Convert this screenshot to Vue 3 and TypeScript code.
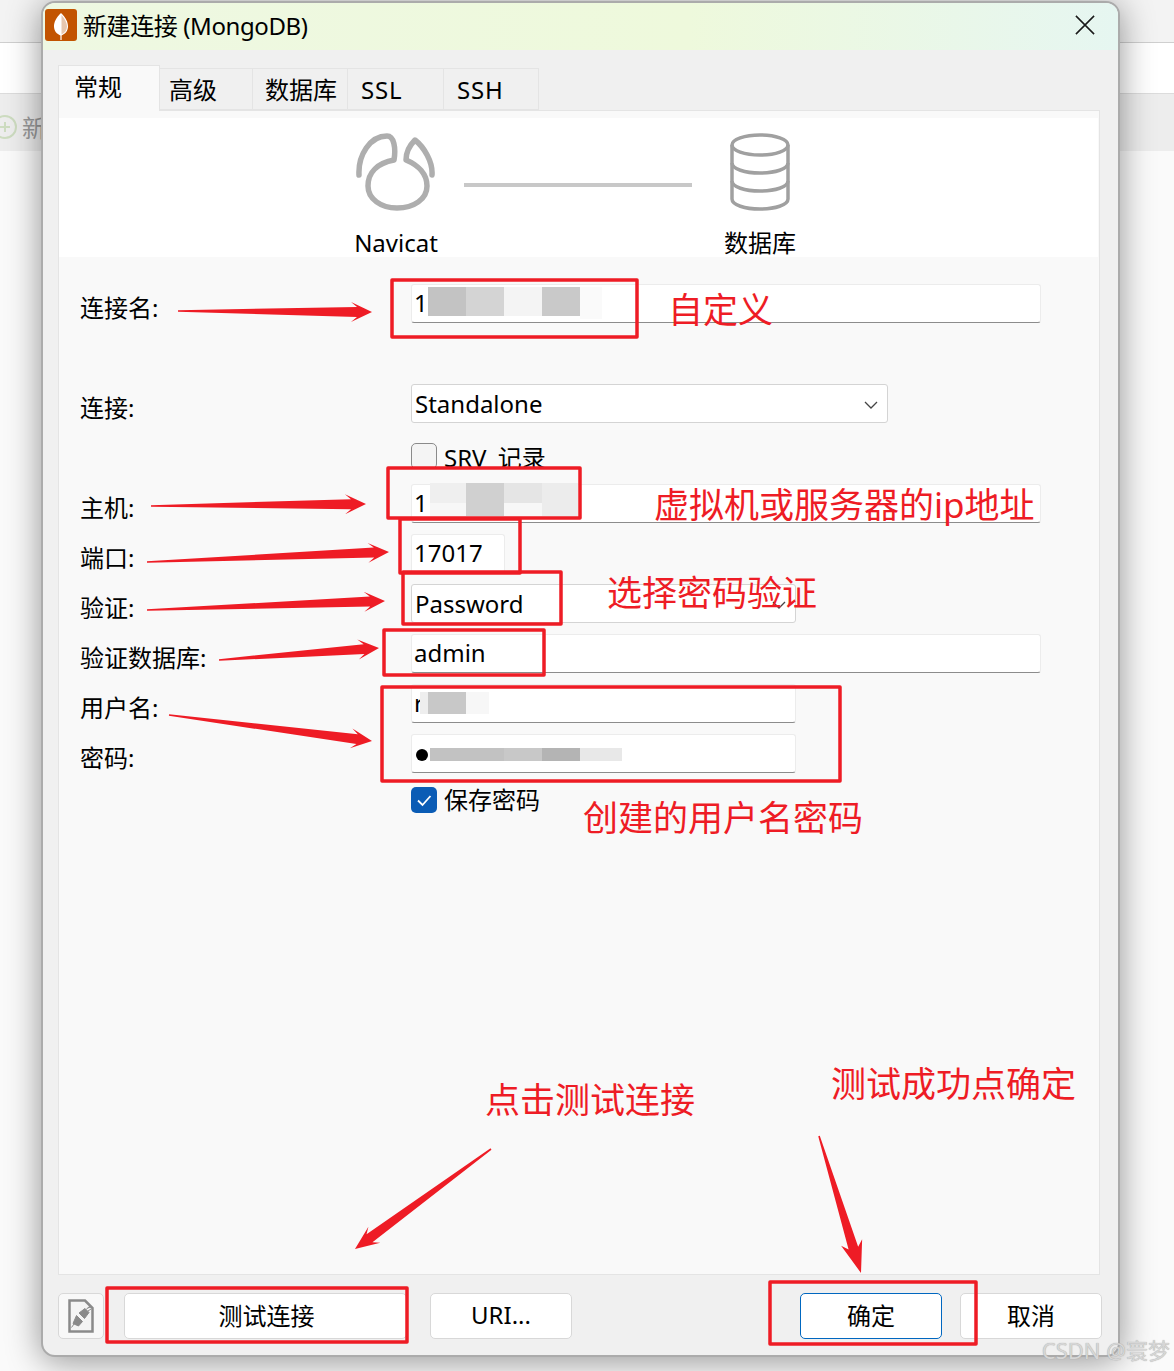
<script setup lang="ts">
import { computed } from 'vue'

type Pt = [number, number]

// hand-drawn arrows of the annotation layer: tail -> tip
const arrows: { from: Pt; to: Pt; len?: number; half?: number }[] = [
  { from: [178, 311], to: [372, 312] },
  { from: [151, 506], to: [366, 504] },
  { from: [147, 562], to: [389, 552] },
  { from: [147, 610], to: [385, 601] },
  { from: [219, 660], to: [379, 648] },
  { from: [169, 715], to: [372, 741] },
  { from: [491, 1149], to: [355, 1249], len: 24, half: 10 },
  { from: [819, 1136], to: [861, 1273], len: 32, half: 11 },
]

const arrowPoints = computed(() =>
  arrows.map(({ from, to, len = 21, half = 10 }) => {
    const dx = to[0] - from[0]
    const dy = to[1] - from[1]
    const d = Math.hypot(dx, dy)
    const ux = dx / d
    const uy = dy / d
    const at = (back: number, side: number) =>
      `${to[0] - ux * back - uy * side},${to[1] - uy * back + ux * side}`
    return [
      at(d, 0.8),
      at(len - 6, 5),
      at(len, half),
      at(0, 0),
      at(len, -half),
      at(len - 6, -5),
      at(d, -0.8),
    ].join(' ')
  }),
)

const boxes = [
  { x: 392, y: 280, w: 245, h: 57 },
  { x: 400, y: 519, w: 120, h: 54 },
  { x: 388, y: 468, w: 192, h: 50 },
  { x: 403, y: 572, w: 158, h: 52 },
  { x: 384, y: 630, w: 160, h: 45 },
  { x: 382, y: 687, w: 458, h: 94 },
  { x: 107, y: 1288, w: 300, h: 54 },
  { x: 770, y: 1282, w: 206, h: 62 },
]

// blurred-out values in the fields
const mosaic = [
  { x: 428, y: 287, w: 38, h: 29, c: '#c3c3c3' },
  { x: 466, y: 287, w: 38, h: 29, c: '#d4d4d4' },
  { x: 504, y: 287, w: 38, h: 29, c: '#f4f4f4' },
  { x: 542, y: 287, w: 38, h: 29, c: '#c9c9c9' },
  { x: 580, y: 287, w: 22, h: 32, c: '#fafafa' },
  { x: 430, y: 503, w: 148, h: 14, c: '#f7f7f7' },
  { x: 430, y: 483, w: 36, h: 20, c: '#efefef' },
  { x: 466, y: 483, w: 38, h: 33, c: '#d0d0d0' },
  { x: 504, y: 483, w: 38, h: 20, c: '#e5e5e5' },
  { x: 542, y: 483, w: 36, h: 33, c: '#ececec' },
  { x: 420, y: 692, w: 8, h: 22, c: '#eeeeee' },
  { x: 428, y: 692, w: 38, h: 22, c: '#c8c8c8' },
  { x: 466, y: 692, w: 23, h: 22, c: '#f7f7f7' },
  { x: 430, y: 748, w: 74, h: 13, c: '#c2c2c2' },
  { x: 504, y: 748, w: 38, h: 13, c: '#c8c8c8' },
  { x: 542, y: 748, w: 38, h: 13, c: '#b4b4b4' },
  { x: 580, y: 748, w: 42, h: 13, c: '#e8e8e8' },
]

const notes = [
  { text: '自定义', x: 668, y: 286 },
  { text: '虚拟机或服务器的ip地址', x: 654, y: 481 },
  { text: '选择密码验证', x: 607, y: 569 },
  { text: '创建的用户名密码', x: 583, y: 794 },
  { text: '点击测试连接', x: 485, y: 1076 },
  { text: '测试成功点确定', x: 831, y: 1060 },
]

const tabs = ['高级', '数据库', 'SSL', 'SSH']
</script>

<template>
  <div class="desk">
    <div class="backdrop">
      <div class="bg-top"></div>
      <div class="bg-white"></div>
      <div class="bg-band">
        <svg class="bg-plus" viewBox="0 0 26 26" fill="none" stroke="#cddcc0" stroke-width="2">
          <circle cx="13" cy="13" r="11" />
          <path d="M13 8v10M8 13h10" />
        </svg>
        <span class="bg-text">新</span>
      </div>
    </div>

    <div class="dialog">
      <div class="titlebar">
        <span class="app-icon">
          <svg viewBox="0 0 32 32" width="32" height="32">
            <path d="M16 4C11 9 9 13 9 17.500C9 22 12 25 15.400 26.500L15.400 31H16.600L16.600 26.500C20 25 23 22 23 17.500C23 13 21 9 16 4Z" fill="#fff" />
            <path d="M16.500 6C20 10 22 14 22 17.500C22 21 20 24 16.500 25.500Z" fill="#e7c7ae" />
          </svg>
        </span>
        <span class="title">新建连接 (MongoDB)</span>
        <svg class="close" viewBox="0 0 22 22" fill="none" stroke="#1a1a1a" stroke-width="1.700">
          <path d="M1 1l20 20M21 1L1 21" />
        </svg>
      </div>

      <div class="tabs">
        <div class="tab active">常规</div>
        <div v-for="t in tabs" :key="t" class="tab">{{ t }}</div>
      </div>

      <div class="panel">
        <div class="hero">
          <div class="hero-col">
            <svg class="hero-icon" viewBox="356 133 80 80" fill="none" stroke="#aeaeae" stroke-width="5.500" stroke-linecap="round" stroke-linejoin="round">
              <path d="M359 175C358 155 370 136 387 136C394 136 396 148 394 160C378 163 368 172 368 186C368 199 381 208 397 208C414 208 427 199 427 186C427 174 418 165 406 160C406 152 409 146 415 140C424 147 433 162 432 175" />
            </svg>
            <div class="hero-label">Navicat</div>
          </div>
          <div class="hero-line"></div>
          <div class="hero-col">
            <svg class="hero-icon" viewBox="720 133 80 80" fill="none" stroke="#a0a0a0" stroke-width="3.500">
              <ellipse cx="760" cy="145" rx="28" ry="10" />
              <path d="M732 145V199C732 205 745 209 760 209C775 209 788 205 788 199V145" />
              <path d="M732 163C732 169 745 173 760 173C775 173 788 169 788 163" />
              <path d="M732 181C732 187 745 191 760 191C775 191 788 187 788 181" />
            </svg>
            <div class="hero-label">数据库</div>
          </div>
        </div>

        <div class="form">
          <div class="row">
            <label>连接名:</label>
            <div class="input w-full">1</div>
          </div>
          <div class="row mt-conn">
            <label>连接:</label>
            <div class="select w-select">
              Standalone
              <svg class="chev" viewBox="0 0 14 8" fill="none" stroke="#444" stroke-width="1.300"><path d="M1 1l6 6 6-6" /></svg>
            </div>
          </div>
          <div class="row-check mt-srv">
            <span class="check"></span>
            <span class="srv">SRV 记录</span>
          </div>
          <div class="row mt-host">
            <label>主机:</label>
            <div class="input w-full">1</div>
          </div>
          <div class="row">
            <label>端口:</label>
            <div class="input w-port">17017</div>
          </div>
          <div class="row">
            <label>验证:</label>
            <div class="select w-mid">
              Password
              <svg class="chev" viewBox="0 0 14 8" fill="none" stroke="#444" stroke-width="1.300"><path d="M1 1l6 6 6-6" /></svg>
            </div>
          </div>
          <div class="row">
            <label>验证数据库:</label>
            <div class="input w-full">admin</div>
          </div>
          <div class="row">
            <label>用户名:</label>
            <div class="input w-mid">r</div>
          </div>
          <div class="row">
            <label>密码:</label>
            <div class="input w-mid"></div>
          </div>
          <div class="row-check mt-save">
            <span class="check on">
              <svg viewBox="0 0 26 26" fill="none" stroke="#fff" stroke-width="1.800"><path d="M7 13.500l4.500 4.500 8-9" /></svg>
            </span>
            <span>保存密码</span>
          </div>
        </div>
      </div>

      <div class="footer">
        <button class="btn btn-icon">
          <svg viewBox="0 0 26 34" width="26" height="34">
            <path d="M1.500 1.500H17L24.500 9V32.500H1.500Z" fill="#f4f4f4" stroke="#8a8a8a" stroke-width="2.500" />
            <path d="M11 14L17 9.500L21 13.500L16.500 19.500ZM18.500 10L21.500 7.500L22.500 8.500M20 12L23 10" fill="#8a8a8a" stroke="#8a8a8a" />
            <path d="M8.500 16.500L14.500 22.500L10.500 27L5 24.500ZM6 25L3.500 28.500" fill="#8a8a8a" stroke="#8a8a8a" />
          </svg>
        </button>
        <button class="btn btn-test">测试连接</button>
        <button class="btn btn-uri">URI...</button>
        <button class="btn btn-ok">确定</button>
        <button class="btn btn-cancel">取消</button>
      </div>
    </div>

    <svg class="marks" viewBox="0 0 1174 1371" width="1174" height="1371">
      <rect v-for="(m, i) in mosaic" :key="i" :x="m.x" :y="m.y" :width="m.w" :height="m.h" :fill="m.c" />
      <circle cx="422" cy="755" r="6" fill="#000" />
      <rect v-for="(b, i) in boxes" :key="'b' + i" :x="b.x" :y="b.y" :width="b.w" :height="b.h" fill="none" stroke="#ee1c25" stroke-width="3.500" stroke-linejoin="round" />
      <polygon v-for="(p, i) in arrowPoints" :key="'a' + i" :points="p" fill="#ee1c25" />
    </svg>

    <span v-for="n in notes" :key="n.text" class="note" :style="{ left: n.x + 'px', top: n.y + 'px' }">{{ n.text }}</span>
    <span class="watermark">CSDN @寰梦</span>
  </div>
</template>

<style scoped>
.desk {
  position: relative;
  width: 1174px;
  height: 1371px;
  overflow: hidden;
  background: #fafafa;
  color: #000;
  font-family: "Noto Sans", "Noto Sans CJK SC", sans-serif;
  font-size: 24px;
}

.bg-top {
  height: 42px;
  background: #f3f3f3;
  border-bottom: 1px solid #cfcfcf;
}

.bg-white {
  height: 50px;
  background: #fff;
  border-bottom: 1px solid #dcdcdc;
}

.bg-band {
  position: relative;
  height: 57px;
  background: #ededed;
}

.bg-plus {
  position: absolute;
  left: -8px;
  top: 20px;
  width: 26px;
  height: 26px;
}

.bg-text {
  position: absolute;
  left: 22px;
  top: 15px;
  color: #9a9a9a;
}

.dialog {
  position: absolute;
  left: 41px;
  top: 1px;
  box-sizing: border-box;
  width: 1079px;
  height: 1356px;
  display: flex;
  flex-direction: column;
  background: #f0f0f0;
  border: 2px solid #ababab;
  border-radius: 14px;
  overflow: hidden;
  box-shadow: 0 4px 34px rgba(0, 0, 0, 0.42);
}

.titlebar {
  flex: none;
  box-sizing: border-box;
  height: 47px;
  display: flex;
  align-items: center;
  padding: 0 0 3px 2px;
  background: linear-gradient(90deg, #eef8e2 0%, #eef9dc 60%, #e6f6f1 100%);
}

.app-icon {
  width: 32px;
  height: 32px;
  border-radius: 3px;
  background: #c25400;
  margin-right: 6px;
}

.app-icon svg {
  display: block;
}

.title {
  flex: 1;
  margin-top: -2px;
  letter-spacing: -0.4px;
}

.close {
  width: 20px;
  height: 20px;
  margin-right: 23px;
}

.tabs {
  flex: none;
  display: flex;
  align-items: flex-end;
  height: 46px;
  margin: 14px 0 0 15px;
}

.tab {
  box-sizing: border-box;
  height: 42px;
  padding: 4px 0 0 12px;
  width: 95px;
  line-height: 34px;
  background: #f0f0f0;
  border: 1px solid #e4e4e4;
  border-left: none;
}

.tab:nth-child(2) {
  width: 93px;
  padding-left: 9px;
}

.tab:nth-child(4) {
  width: 96px;
  padding-left: 13px;
  letter-spacing: 0.8px;
}

.tab:nth-child(5) {
  padding-left: 13px;
  letter-spacing: 0.8px;
}

.tab.active {
  position: relative;
  z-index: 1;
  width: 102px;
  height: 46px;
  margin-bottom: -1px;
  padding: 4px 0 0 15px;
  background: #f9f9f9;
  border-left: 1px solid #e4e4e4;
  border-bottom: none;
}

.panel {
  flex: 1;
  min-height: 0;
  margin: 0 18px 0 15px;
  padding-top: 7px;
  background: #f9f9f9;
  border: 1px solid #e4e4e4;
}

.hero {
  display: flex;
  height: 139px;
  margin-right: 1px;
  padding-left: 277px;
  background: #fff;
}

.hero-col {
  width: 120px;
  padding-top: 15px;
  text-align: center;
}

.hero-icon {
  display: block;
  width: 80px;
  height: 80px;
  margin: 0 auto;
}

.hero-label {
  margin-top: 13px;
  line-height: 34px;
}

.hero-line {
  width: 228px;
  height: 4px;
  margin: 65px 8px 0;
  background: #c8c8c8;
}

.form {
  display: flex;
  flex-direction: column;
  gap: 11px;
  padding: 27px 0 0 21px;
}

.row {
  display: grid;
  grid-template-columns: 331px auto;
  justify-content: start;
  height: 39px;
}

.row label {
  padding-top: 7px;
  line-height: 34px;
}

.input,
.select {
  box-sizing: border-box;
  height: 39px;
  background: #fff;
  border: 1px solid #ececec;
  border-radius: 3px;
  white-space: nowrap;
}

.input {
  padding-left: 2px;
  line-height: 35px;
  border-bottom: 1px solid #8c8c8c;
}

.select {
  position: relative;
  padding-left: 3px;
  line-height: 37px;
  border-color: #d4d4d4;
}

.chev {
  position: absolute;
  right: 9px;
  top: 16px;
  width: 14px;
  height: 8px;
}

.w-full {
  width: 630px;
}

.w-mid {
  width: 385px;
}

.w-select {
  width: 477px;
}

.w-port {
  width: 94px;
}

.row-check {
  display: flex;
  align-items: flex-start;
  gap: 7px;
  margin-left: 331px;
  line-height: 30px;
}

/* the host field sits on top of this row in the reference, so it is cut off */
.mt-srv {
  margin-top: 9px;
  height: 24px;
  overflow: hidden;
}

.srv {
  word-spacing: 5px;
}

.check {
  flex: none;
  box-sizing: border-box;
  width: 26px;
  height: 26px;
  background: #f4f4f4;
  border: 1.500px solid #8a8a8a;
  border-radius: 5px;
}

.check.on {
  background: #0b5cb5;
  border: none;
}

.check svg {
  display: block;
}

.mt-conn {
  margin-top: 50px;
}

.mt-host {
  margin-top: 6px;
}

.mt-save {
  margin-top: 3px;
  line-height: 26px;
}

.footer {
  flex: none;
  height: 80px;
  display: flex;
  box-sizing: border-box;
  padding: 18px 15px 0;
}

.btn {
  box-sizing: border-box;
  height: 46px;
  padding: 0 0 3px;
  font: inherit;
  color: #000;
  background: #fff;
  border: 1px solid #d8d8d8;
  border-radius: 5px;
}

.btn-icon {
  width: 46px;
  padding: 0;
  background: #f8f8f8;
  display: flex;
  align-items: center;
  justify-content: center;
}

.btn-test {
  width: 283px;
  margin-left: 20px;
  padding-left: 2px;
}

.btn-uri {
  width: 142px;
  margin-left: 23px;
}

.btn-ok {
  width: 142px;
  margin-left: 228px;
  border-color: #0067c0;
}

.btn-cancel {
  width: 142px;
  margin-left: 18px;
}

.marks {
  position: absolute;
  left: 0;
  top: 0;
  pointer-events: none;
}

.note {
  position: absolute;
  font-size: 35px;
  line-height: 48px;
  color: #ee1c25;
  white-space: nowrap;
}

.watermark {
  position: absolute;
  right: 4px;
  top: 1335px;
  font-size: 22px;
  line-height: 30px;
  color: #d6d6d6;
  text-shadow: 0 0 1px #9a9a9a;
  white-space: nowrap;
}
</style>
